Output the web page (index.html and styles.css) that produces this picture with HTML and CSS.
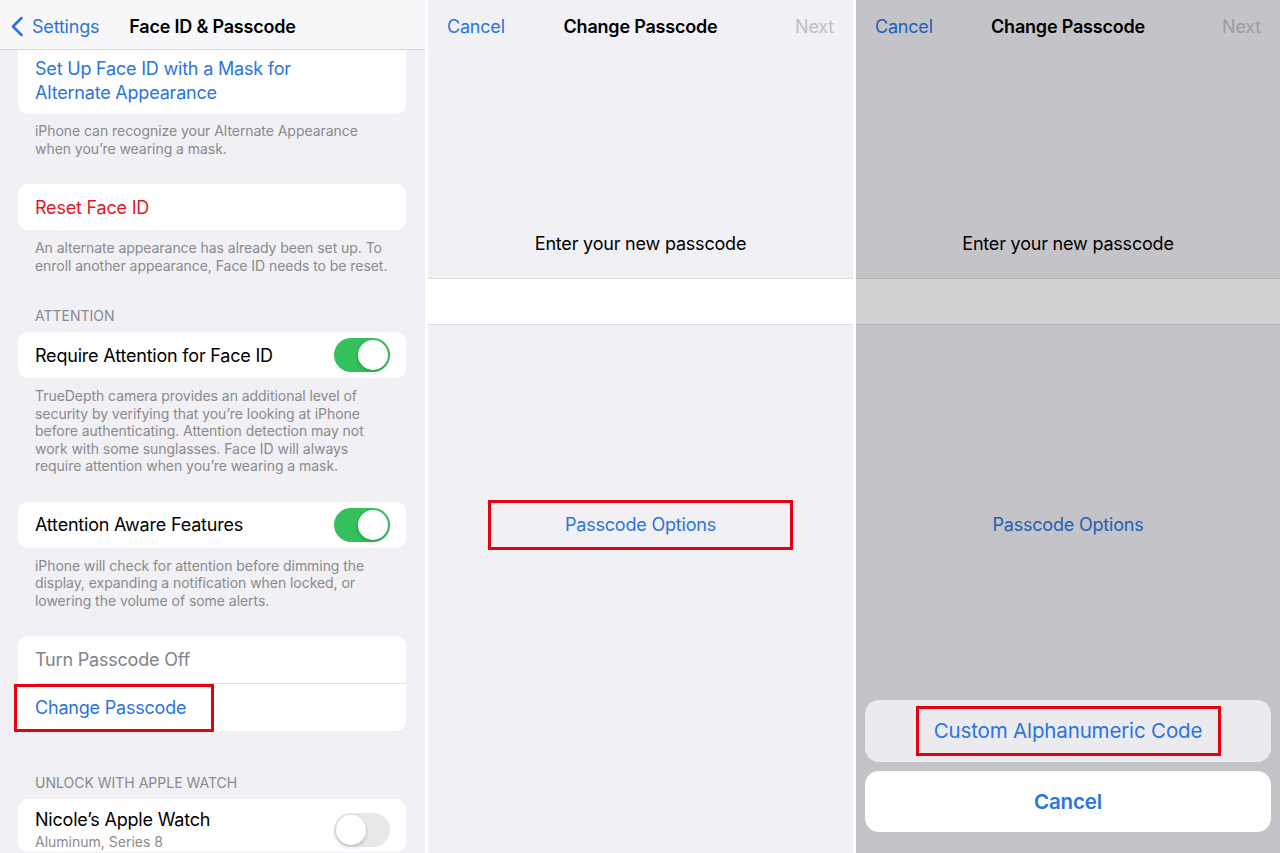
FILE: index.html
```
<!DOCTYPE html>
<html lang="en">
<head>
    <meta charset="UTF-8">
    <meta name="viewport" content="width=device-width, initial-scale=1.0">
    <title>Face ID &amp; Passcode</title>
    <link rel="stylesheet" href="styles.css">
</head>
<body>

<div class="screens">

    <!-- Pantalla 1: ajustes -->
    <section class="screen settings">
        <header class="nav nav-solid">
            <a class="back">
                <svg class="chevron" width="14" height="21" viewBox="0 0 14 21"><polyline points="11.5,2 3,10.5 11.5,19" fill="none" stroke="#2a74e0" stroke-width="2.6" stroke-linecap="round" stroke-linejoin="round"/></svg>
                Settings
            </a>
            <div class="nav-title">Face ID &amp; Passcode</div>
            <div></div>
        </header>

        <div class="list">
            <div class="card card-cut">
                Set Up Face ID with a Mask for<br>Alternate Appearance
            </div>
            <p class="note">iPhone can recognize your Alternate Appearance<br>when you’re wearing a mask.</p>

            <div class="card">
                <div class="row red">Reset Face ID</div>
            </div>
            <p class="note">An alternate appearance has already been set up. To<br>enroll another appearance, Face ID needs to be reset.</p>

            <div class="section-label">ATTENTION</div>
            <div class="card">
                <div class="row">Require Attention for Face ID <span class="toggle on"></span></div>
            </div>
            <p class="note">TrueDepth camera provides an additional level of<br>security by verifying that you’re looking at iPhone<br>before authenticating. Attention detection may not<br>work with some sunglasses. Face ID will always<br>require attention when you’re wearing a mask.</p>

            <div class="card">
                <div class="row">Attention Aware Features <span class="toggle on"></span></div>
            </div>
            <p class="note">iPhone will check for attention before dimming the<br>display, expanding a notification when locked, or<br>lowering the volume of some alerts.</p>

            <div class="card card-spaced">
                <div class="row tall muted">Turn Passcode Off</div>
                <div class="separator"></div>
                <div class="row tall"><span class="mark mark-row">Change Passcode</span></div>
            </div>

            <div class="section-label">UNLOCK WITH APPLE WATCH</div>
            <div class="card">
                <div class="row row-double">
                    <div>
                        <div class="row-title">Nicole’s Apple Watch</div>
                        <div class="row-sub">Aluminum, Series 8</div>
                    </div>
                    <span class="toggle"></span>
                </div>
            </div>
        </div>
    </section>

    <!-- Pantalla 2: nuevo código -->
    <section class="screen passcode">
        <header class="nav">
            <div class="link">Cancel</div>
            <div class="nav-title">Change Passcode</div>
            <div class="nav-right disabled">Next</div>
        </header>
        <div class="prompt">Enter your new passcode</div>
        <div class="entry"></div>
        <div class="options">
            <span class="mark mark-options">Passcode Options</span>
        </div>
    </section>

    <!-- Pantalla 3: opciones abiertas -->
    <section class="screen passcode">
        <header class="nav">
            <div class="link">Cancel</div>
            <div class="nav-title">Change Passcode</div>
            <div class="nav-right disabled">Next</div>
        </header>
        <div class="prompt">Enter your new passcode</div>
        <div class="entry"></div>
        <div class="options">
            <span class="mark mark-options no-mark">Passcode Options</span>
        </div>

        <div class="dim"></div>
        <div class="sheet">
            <div class="sheet-group">
                <span class="mark mark-sheet">Custom Alphanumeric Code</span>
            </div>
            <div class="sheet-cancel">Cancel</div>
        </div>
    </section>

</div>

</body>
</html>
```

FILE: styles.css
```
body {
    margin: 0;
    background: #fff;
    font-family: Inter, "Noto Sans", sans-serif;
    color: #000;
}
.screens {
    display: grid;
    grid-template-columns: 425px 425px 424px;
    column-gap: 3px;
    height: 853px;
    overflow: hidden;
    font-size: 18px;
    letter-spacing: -0.2px;
}
.screen {
    position: relative;
    background: #f0f0f5;
    overflow: hidden;
}

/* barra de navegación */
.nav {
    height: 50px;
    box-sizing: border-box;
    display: grid;
    grid-template-columns: 1fr auto 1fr;
    align-items: center;
    padding: 2px 19px 0;
}
.nav-solid {
    background: #f8f8fa;
    border-bottom: 1px solid #d8d8dc;
    padding: 3px 10px 0;
}
.nav-title {
    font-weight: 600;
}
.nav-right {
    justify-self: end;
}
.back {
    display: flex;
    align-items: center;
    gap: 8px;
    color: #2a74e0;
}
.link {
    color: #2a74e0;
}
.disabled {
    color: #bfbfc4;
}

/* lista de ajustes */
.list {
    display: flex;
    flex-direction: column;
    padding: 0 19px 0 18px;
}
.card {
    background: #fff;
    border-radius: 10px;
}
.card-cut {
    border-radius: 0 0 10px 10px;
    padding: 7px 17px 9px;
    line-height: 24px;
    color: #2a74e0;
}
.card-spaced {
    margin-bottom: 37px;
}
.row {
    height: 46px;
    display: flex;
    align-items: center;
    justify-content: space-between;
    padding: 0 17px;
}
.row.tall {
    height: 47px;
    color: #2a74e0;
}
.row.muted {
    color: #828287;
}
.row.red {
    color: #e3161e;
}
.row-double {
    height: auto;
    align-items: flex-start;
    padding-top: 9px;
}
.row-title {
    line-height: 24px;
}
.row-sub {
    font-size: 14px;
    letter-spacing: 0;
    line-height: 20px;
    color: #8a8a8e;
}
.row-double .toggle {
    margin-top: 5px;
}
.separator {
    height: 1px;
    background: #dedee2;
    margin-left: 17px;
}
.note {
    margin: 9px 17px 27px;
    font-size: 14px;
    letter-spacing: -0.05px;
    line-height: 17.5px;
    color: #8a8a8e;
    white-space: nowrap;
}
.list > .card-cut + .note {
    margin-top: 8px;
}
.section-label {
    margin: 6px 17px 7px;
    font-size: 14px;
    letter-spacing: 0;
    line-height: 18px;
    color: #8a8a8e;
}

/* interruptor */
.toggle {
    position: relative;
    flex: none;
    width: 56px;
    height: 34px;
    border-radius: 17px;
    background: #e8e8ea;
    margin-right: -1px;
}
.toggle::after {
    content: "";
    position: absolute;
    top: 2px;
    left: 2px;
    width: 30px;
    height: 30px;
    border-radius: 50%;
    background: #fff;
    box-shadow: 0 2px 4px rgba(0, 0, 0, 0.2);
}
.toggle.on {
    background: #34c05c;
}
.toggle.on::after {
    left: 24px;
}

/* marcos rojos */
.mark {
    display: inline-block;
    box-sizing: border-box;
    border: 3px solid #e6000f;
}
.mark-row {
    margin: 0 0 0 -21px;
    padding: 0 25px 0 18px;
    line-height: 42px;
}
.mark-options {
    width: 305px;
    padding: 10px 0;
    line-height: 24px;
    text-align: center;
}
.no-mark {
    border-color: transparent;
}
.mark-sheet {
    width: 305px;
    padding: 9px 0;
    line-height: 26px;
    text-align: center;
}

/* pantalla de código */
.prompt {
    margin-top: 182px;
    text-align: center;
    line-height: 24px;
}
.entry {
    margin-top: 22px;
    height: 45px;
    background: #fff;
    border-top: 1px solid #dcdce0;
    border-bottom: 1px solid #dcdce0;
}
.options {
    margin-top: 175px;
    text-align: center;
    color: #2a74e0;
}
.dim {
    position: absolute;
    inset: 0;
    background: rgba(0, 0, 0, 0.18);
}
.sheet {
    position: absolute;
    left: 9px;
    right: 9px;
    bottom: 21px;
    display: flex;
    flex-direction: column;
    gap: 9px;
    font-size: 20.5px;
    letter-spacing: -0.15px;
    color: #2a74e0;
    text-align: center;
}
.sheet-group {
    height: 62px;
    display: flex;
    align-items: center;
    justify-content: center;
    background: #ebebef;
    border-radius: 14px;
}
.sheet-cancel {
    height: 61px;
    line-height: 61px;
    background: #fff;
    border-radius: 14px;
    font-weight: 600;
}
```
